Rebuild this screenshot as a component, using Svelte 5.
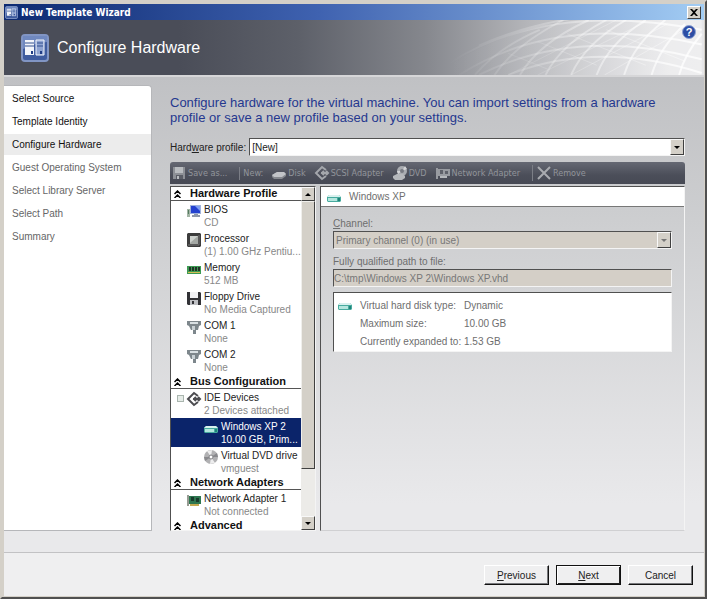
<script>
	// Wizard pages
	const steps = [
		'Select Source',
		'Template Identity',
		'Configure Hardware',
		'Guest Operating System',
		'Select Library Server',
		'Select Path',
		'Summary'
	];
	const currentStep = 2;

	// Toolbar buttons under "New:"
	const newDevices = [
		{ icon: 'disk', label: 'Disk' },
		{ icon: 'scsi', label: 'SCSI Adapter' },
		{ icon: 'dvd', label: 'DVD' },
		{ icon: 'network', label: 'Network Adapter' }
	];

	// Hardware tree
	let groups = $state([
		{
			title: 'Hardware Profile',
			open: true,
			items: [
				{ icon: 'bios', name: 'BIOS', info: 'CD' },
				{ icon: 'cpu', name: 'Processor', info: '(1) 1.00 GHz Pentiu...' },
				{ icon: 'memory', name: 'Memory', info: '512 MB' },
				{ icon: 'floppy', name: 'Floppy Drive', info: 'No Media Captured' },
				{ icon: 'com', name: 'COM 1', info: 'None' },
				{ icon: 'com', name: 'COM 2', info: 'None' }
			]
		},
		{
			title: 'Bus Configuration',
			open: true,
			items: [
				{ icon: 'ide', name: 'IDE Devices', info: '2 Devices attached', root: true },
				{ icon: 'drive', name: 'Windows XP 2', info: '10.00 GB, Prim...', child: true },
				{ icon: 'cd', name: 'Virtual DVD drive', info: 'vmguest', child: true }
			]
		},
		{
			title: 'Network Adapters',
			open: true,
			items: [{ icon: 'nic', name: 'Network Adapter 1', info: 'Not connected' }]
		},
		{ title: 'Advanced', open: true, items: [] }
	]);

	let selected = $state('Windows XP 2');

	const diskInfo = [
		['Virtual hard disk type:', 'Dynamic'],
		['Maximum size:', '10.00 GB'],
		['Currently expanded to:', '1.53 GB']
	];
</script>

{#snippet icon(name)}
	<svg viewBox="0 0 16 16" width="16" height="16" aria-hidden="true">
		{#if name === 'save'}
			<path d="M2 2h12v12H2z" fill="#8d9096" />
			<path d="M4 2h8v6H4z" fill="#b9bcc0" />
			<path d="M5 10h7v4H5z" fill="#5a5d66" />
			<path d="M6 11h2v3H6z" fill="#b9bcc0" />
		{:else if name === 'disk'}
			<path d="M1 10l5-3h7l2 2v2l-4 3H3l-2-2z" fill="#85888e" />
			<path d="M1 10l5-3h7l2 2-4 3H3z" fill="#c2c4c8" />
		{:else if name === 'scsi' || name === 'ide'}
			<g fill="none" stroke={name === 'ide' ? '#4c4c50' : '#a4a7ac'} stroke-width="2">
				<path d="M12 5L8 2 2 8l6 6 4-3" />
				<path d="M7 8h7M10 6L8 8l2 2M12 6l2 2-2 2" />
			</g>
		{:else if name === 'dvd'}
			<circle cx="10" cy="6" r="5" fill="#a9acb1" />
			<path d="M10 6l3-5 2 3zM10 6l-4 3-1-3z" fill="#d4d5d8" />
			<circle cx="10" cy="6" r="2" fill="#777a82" />
			<path d="M1 11l4-2h6l2 2v2l-3 2H3l-2-2z" fill="#b5b8bc" />
		{:else if name === 'network'}
			<path d="M1 3h2v11H1zM3 4h12v7H3z" fill="#989ba1" />
			<path d="M5 5h3v4H5zM10 6h3v3h-3z" fill="#5e616a" />
			<path d="M5 11h7v2H5z" fill="#b5b8bc" />
		{:else if name === 'remove'}
			<path d="M2 2l12 12M14 2L2 14" stroke="#a9abb0" stroke-width="2" fill="none" />
		{:else if name === 'bios'}
			<path d="M1 6h3v8H1z" fill="#a3b5a5" />
			<path d="M2 7h1v4H2z" fill="#557a60" />
			<path d="M4 2h11v9H4z" fill="#9fb2dc" />
			<path d="M5 3h9v7H5z" fill="#2441d0" />
			<path d="M9 3h5v5z" fill="#7fa0f2" />
			<path d="M8 11h4v1h2v2H6v-2h2z" fill="#8e98aa" />
		{:else if name === 'cpu'}
			<path d="M2 1h12l1 1v12l-1 1H2l-1-1V2z" fill="#3c3c3c" />
			<path d="M2 13h11V3" stroke="#777" fill="none" />
			<path d="M4 4h8v8H4z" fill="#a4a8a4" />
			<path d="M4 4h8l-8 7z" fill="#cdd1cd" />
		{:else if name === 'memory'}
			<path d="M1 5h14v8H1z" fill="#3d9a53" />
			<path d="M3 6h2v4H3zM6 6h2v4H6zM9 6h2v4H9zM12 6h2v4h-2z" fill="#223227" />
			<path d="M2 11h12v1H2z" fill="#d3bd54" />
		{:else if name === 'floppy'}
			<path d="M1 2h13l1 1v12H2l-1-1z" fill="#323236" />
			<path d="M4 2h8v6H4z" fill="#f1f1f3" />
			<path d="M4 10h8v5H4z" fill="#bfc0c4" />
			<path d="M6 11h2v3H6z" fill="#323236" />
		{:else if name === 'com'}
			<path d="M1 2h14v4l-2 1H3L1 6z" fill="#7e878c" />
			<path d="M4 3h8v2H4z" fill="#d9e0e3" />
			<path d="M3 7h10l-1 4h-2v4H7v-4H5z" fill="#7d878c" />
			<path d="M6 7h3v4H6z" fill="#c9d1d5" />
		{:else if name === 'drive'}
			<path d="M1 8l2-2h10l2 2v4l-1 1H2l-1-1z" fill="#48ab9f" />
			<path d="M1 8l2-2h10l2 2z" fill="#d9f1ee" />
			<path d="M2 9h9v3H2z" fill="#b4e6de" />
			<path d="M12 9h2v3h-2z" fill="#1f8378" />
		{:else if name === 'cd'}
			<circle cx="8" cy="8" r="7" fill="#b1b1b3" />
			<path d="M8 8L4 2l5-1zM8 8l4 6-5 1z" fill="#ededee" />
			<path d="M8 8l6-4 1 4zM8 8l-6 4-1-4z" fill="#89898d" />
			<circle cx="8" cy="8" r="2" fill="#fff" stroke="#808084" />
		{:else if name === 'nic'}
			<path d="M1 3h2v11H1z" fill="#969b92" />
			<path d="M3 4h12v8H3z" fill="#2e7650" />
			<path d="M5 5h3v4H5zM10 6h3v4h-3z" fill="#193b2c" />
			<path d="M4 12h9v2H4z" fill="#c3a950" />
		{/if}
	</svg>
{/snippet}

{#snippet server(size)}
	<svg viewBox="0 0 28 28" width={size} height={size} aria-hidden="true">
		<rect x="1" y="1" width="26" height="26" rx="3" fill="#3f5c9f" stroke="#8195c4" stroke-width="2" />
		<path d="M2 2h24v6Q14 9 2 15z" fill="#7089c0" />
		<path d="M4 6h9v15H4z" fill="#f2f5fb" />
		<path d="M15 6h8v15h-8z" fill="#8fa4d2" stroke="#f2f5fb" />
		<path d="M4 9h9M4 12h9M16 9h6M16 12h6" stroke="#32508f" />
		<path d="M10 17h2v3h-2zM19 17h2v3h-2z" fill="#203d86" />
	</svg>
{/snippet}

<div class="window">
	<header class="titlebar">
		{@render server(13)}
		<span class="title">New Template Wizard</span>
		<button class="close" aria-label="Close">
			<svg viewBox="0 0 8 7" width="8" height="7"><path d="M0 0h2l2 2 2-2h2L5 3.500 8 7H6L4 5 2 7H0l3-3.500z" fill="#000" /></svg>
		</button>
	</header>

	<div class="banner">
		<svg class="mesh" viewBox="0 0 257 56" width="257" height="56" aria-hidden="true">
			<defs>
				<linearGradient id="fade" gradientUnits="userSpaceOnUse" x1="0" y1="0" x2="257" y2="0">
					<stop offset="0" stop-color="#fff" stop-opacity="0" />
					<stop offset="0.4" stop-color="#fff" stop-opacity="0.25" />
					<stop offset="1" stop-color="#fff" stop-opacity="0.8" />
				</linearGradient>
			</defs>
			<path d="M0 46Q100-18 257 0v56H0z" fill="url(#fade)" opacity="0.4" />
			<g fill="none" stroke="url(#fade)" stroke-width="2">
				<path d="M0 44Q100-20 257 10M10 56Q110-8 257 25M30 56Q130 6 257 40M60 56Q150 20 257 54M30 26Q130-18 257-2" />
				<path d="M26 56Q50 28 92 10M46 56Q66 26 116 0M72 56Q90 24 142 0M98 56Q114 24 160 0M124 56Q138 24 180 0M150 56Q162 24 200 0M178 56Q188 24 220 0M206 56Q214 28 240 4M234 56Q240 34 257 14" />
			</g>
			<g fill="none" stroke="url(#fade)" opacity="0.6">
				<path d="M60 56L170 0M90 56L200 2M124 56L222 4M158 56L250 4M60 34L100 50M90 22L150 46M120 14L200 46M160 10L240 42" />
			</g>
		</svg>
		{@render server(28)}
		<h1>Configure Hardware</h1>
		<button class="help" aria-label="Help">?</button>
	</div>

	<div class="body">
		<nav class="steps">
			{#each steps as step, i}
				<a href="#step{i}" class:active={i === currentStep} class:todo={i > currentStep}>{step}</a>
			{/each}
		</nav>

		<main>
			<p class="intro">
				Configure hardware for the virtual machine. You can import settings from a hardware
				profile or save a new profile based on your settings.
			</p>

			<div class="profile">
				<label for="profile">Hard<u>w</u>are profile:</label>
				<div class="select">
					<select id="profile"><option>[New]</option></select>
					<span class="arrow"></span>
				</div>
			</div>

			<div class="toolbar">
				<button disabled>{@render icon('save')}Save as...</button>
				<span class="new">New:</span>
				{#each newDevices as device}
					<button disabled>{@render icon(device.icon)}{device.label}</button>
				{/each}
				<button class="remove" disabled>{@render icon('remove')}Remove</button>
			</div>

			<div class="panes">
				<div class="tree">
					<div class="tree-list">
						{#each groups as group}
							<button class="group" onclick={() => (group.open = !group.open)}>
								<svg class:closed={!group.open} viewBox="0 0 7 8" width="7" height="8" aria-hidden="true">
									<path d="M0.500 4l3-3 3 3M0.500 8l3-3 3 3" fill="none" stroke="#000" stroke-width="1.500" />
								</svg>
								{group.title}
							</button>
							{#if group.open}
								{#each group.items as item}
									<button
										class="item"
										class:root={item.root}
										class:child={item.child}
										class:selected={selected === item.name}
										onclick={() => (selected = item.name)}
									>
										{#if item.root}<span class="expander"></span>{/if}
										{@render icon(item.icon)}
										<span class="text">
											<span class="name">{item.name}</span>
											<span class="info">{item.info}</span>
										</span>
									</button>
								{/each}
							{/if}
						{/each}
					</div>
					<div class="scrollbar">
						<span class="arrow up"></span>
						<span class="thumb"></span>
						<span class="arrow"></span>
					</div>
				</div>

				<section class="detail">
					<h2>{@render icon('drive')}Windows XP</h2>
					<div class="form">
						<label for="channel"><u>C</u>hannel:</label>
						<div class="select off">
							<select id="channel" disabled><option>Primary channel (0) (in use)</option></select>
							<span class="arrow"></span>
						</div>
						<label for="path">Fully qualified path to file:</label>
						<input id="path" type="text" value="C:\tmp\Windows XP 2\Windows XP.vhd" disabled />
						<div class="disk">
							{@render icon('drive')}
							<dl>
								{#each diskInfo as [term, value]}
									<dt>{term}</dt>
									<dd>{value}</dd>
								{/each}
							</dl>
						</div>
					</div>
				</section>
			</div>
		</main>
	</div>

	<footer>
		<button><u>P</u>revious</button>
		<button class="default"><u>N</u>ext</button>
		<button>Cancel</button>
	</footer>
</div>

<style>
	:global(body) {
		margin: 0;
	}

	.window {
		box-sizing: border-box;
		height: 100vh;
		display: flex;
		flex-direction: column;
		padding: 2px 1px 1px 2px;
		border: 2px solid #d4d0c8;
		border-right-color: #505050;
		border-bottom-color: #505050;
		background: #d4d0c8;
		font-family: 'Liberation Sans', sans-serif;
		font-size: 10px;
		line-height: 13px;
		color: #222;
	}

	button,
	select,
	input {
		box-sizing: border-box;
		margin: 0;
		padding: 0;
		border: none;
		border-radius: 0;
		background: none;
		font: inherit;
		color: inherit;
		text-align: left;
	}

	svg {
		flex: none;
		display: block;
	}

	/* Title bar */
	.titlebar {
		flex: none;
		height: 16px;
		display: flex;
		align-items: center;
		gap: 3px;
		padding: 0 3px 0 1px;
		background: linear-gradient(90deg, #0d2a71, #3f62b0 45%, #a3cdf4);
	}

	.title {
		flex: 1;
		color: #fff;
		font: bold 10px 'DejaVu Sans Condensed', 'DejaVu Sans', sans-serif;
	}

	.close {
		width: 14px;
		height: 13px;
		display: flex;
		align-items: center;
		justify-content: center;
		background: #d4d0c8;
		border: 1px solid;
		border-color: #fff #404040 #404040 #fff;
	}

	/* Banner */
	.banner {
		position: relative;
		flex: none;
		height: 55px;
		display: flex;
		align-items: center;
		gap: 8px;
		padding: 0 17px;
		background: linear-gradient(90deg, #4a4d58 25%, #5d6069 42%, #85878d 60%, #b5b6ba 75%, #e6e6e8 95%);
		border-bottom: 2px solid #d6d6d8;
	}

	.mesh {
		position: absolute;
		right: 0;
		top: 0;
		height: 100%;
	}

	h1 {
		margin: 0;
		flex: 1;
		color: #fff;
		font: 16px/20px 'Liberation Sans', sans-serif;
	}

	.help {
		position: absolute;
		right: 8px;
		top: 5px;
		width: 14px;
		height: 14px;
		border: 1px solid #8ea2d2;
		border-radius: 50%;
		background: #2c4da4;
		color: #fff;
		font: bold 11px/12px 'Liberation Sans', sans-serif;
		text-align: center;
	}

	/* Body */
	.body {
		flex: 1;
		min-height: 0;
		display: flex;
		gap: 18px;
		padding: 8px 19px 21px 0;
		background: linear-gradient(#c0c1c4, #cdced0 30%, #e9e9eb 90%);
	}

	.steps {
		flex: none;
		width: 148px;
		display: flex;
		flex-direction: column;
		gap: 2px;
		padding-top: 2px;
		box-sizing: border-box;
		border: 1px solid #b6b7ba;
		border-left: none;
		border-radius: 0 4px 0 0;
		background: #fff;
	}

	.steps a {
		padding: 4px 8px;
		color: #111;
		text-decoration: none;
	}

	.steps a.active {
		background: #ececec;
	}

	.steps a.todo {
		color: #666;
	}

	main {
		flex: 1;
		min-width: 0;
		display: flex;
		flex-direction: column;
	}

	.intro {
		margin: 10px 0 13px;
		max-width: 490px;
		color: #25388f;
		font: 13px/15px 'Liberation Sans', sans-serif;
	}

	.profile {
		display: flex;
		align-items: center;
		gap: 3px;
	}

	.select {
		flex: 1;
		height: 18px;
		box-sizing: border-box;
		display: flex;
		border: 1px solid;
		border-color: #505050 #f4f4f4 #f4f4f4 #505050;
		background: #fff;
	}

	.select select {
		flex: 1;
		appearance: none;
		padding-left: 2px;
		opacity: 1;
	}

	.arrow {
		flex: none;
		box-sizing: border-box;
		width: 14px;
		height: 14px;
		display: flex;
		align-items: center;
		justify-content: center;
		border: 1px solid;
		border-color: #f8f8f8 #404040 #404040 #f8f8f8;
		background: #d4d0c8;
		pointer-events: none;
	}

	.select .arrow {
		height: auto;
	}

	.arrow::after {
		content: '';
		border: 3px solid transparent;
		border-top-color: #000;
		border-bottom: none;
	}

	.arrow.up::after {
		border-top: none;
		border-bottom: 3px solid #000;
	}

	/* Toolbar */
	.toolbar {
		flex: none;
		height: 22px;
		margin-top: 6px;
		display: flex;
		align-items: center;
		gap: 8px;
		padding-left: 1px;
		border-radius: 3px 3px 0 0;
		background: linear-gradient(#656873, #4b4e59 60%, #474a55);
		color: #92959b;
		font: 9px/13px 'DejaVu Sans Condensed', 'DejaVu Sans', sans-serif;
		white-space: nowrap;
	}

	.toolbar button {
		display: flex;
		align-items: center;
		gap: 1px;
	}

	.toolbar .new,
	.toolbar .remove {
		margin-left: 4px;
		padding-left: 3px;
		border-left: 1px solid #7b7e86;
	}

	/* Panes */
	.panes {
		flex: 1;
		min-height: 0;
		display: flex;
		gap: 4px;
		padding-top: 2px;
	}

	.tree {
		flex: none;
		box-sizing: border-box;
		width: 146px;
		display: flex;
		border: 1px solid;
		border-color: #505050 #f4f4f4 #f4f4f4 #505050;
		background: #fff;
	}

	.tree-list {
		flex: 1;
		min-width: 0;
		overflow: hidden;
	}

	.group {
		width: 100%;
		height: 14px;
		display: flex;
		align-items: center;
		gap: 9px;
		padding-left: 3px;
		border-bottom: 1px solid #555;
		color: #111;
		font: bold 11px/13px 'Liberation Sans', sans-serif;
	}

	.closed {
		transform: rotate(180deg);
	}

	.item {
		width: 100%;
		height: 29px;
		display: flex;
		gap: 2px;
		padding: 2px 0 0 15px;
		white-space: nowrap;
	}

	.item.root {
		padding-left: 6px;
	}

	.item.child {
		padding-left: 32px;
	}

	.item.selected {
		background: #0b246a;
	}

	.text span {
		display: block;
	}

	.info {
		color: #888;
	}

	.selected .text span {
		color: #fff;
	}

	.expander {
		width: 5px;
		height: 5px;
		margin: 4px 0 0;
		border: 1px solid #a9b5ae;
		background: #e6ece8;
	}

	.scrollbar {
		flex: none;
		width: 14px;
		display: flex;
		flex-direction: column;
		background: #ecebe8;
	}

	.thumb {
		flex: none;
		height: 78%;
		box-sizing: border-box;
		border: 1px solid;
		border-color: #f0efec #404040 #404040 #f0efec;
		background: #d4d0c8;
	}

	.scrollbar .arrow:last-child {
		margin-top: auto;
	}

	.detail {
		flex: 1;
		min-width: 0;
		border: 1px solid;
		border-color: #505050 #f4f4f4 #d0d0d2 #505050;
		color: #6e6e6e;
	}

	h2 {
		margin: 0;
		height: 19px;
		display: flex;
		align-items: center;
		gap: 7px;
		padding-left: 5px;
		border-bottom: 1px solid #777;
		background: #fff;
		font-size: 10px;
		font-weight: normal;
	}

	.form {
		display: flex;
		flex-direction: column;
		padding: 10px 12px;
	}

	.form label {
		margin-bottom: 1px;
	}

	.form .select {
		flex: none;
		margin-bottom: 6px;
	}

	.off,
	.form input {
		background: #d4cfc7;
	}

	.off .arrow::after {
		border-top-color: #777;
	}

	.form select,
	.form input {
		color: #777;
	}

	.form input {
		height: 18px;
		border: 1px solid;
		border-color: #505050 #f4f4f4 #f4f4f4 #505050;
	}

	.disk {
		display: flex;
		gap: 7px;
		margin-top: 5px;
		padding: 4px 3px 0;
		border: 1px solid;
		border-color: #505050 #f4f4f4 #f4f4f4 #505050;
		background: #fff;
	}

	dl {
		margin: 0;
		display: grid;
		grid-template-columns: 104px auto;
		line-height: 18px;
		white-space: nowrap;
	}

	dd {
		margin: 0;
	}

	/* Footer */
	footer {
		flex: none;
		display: flex;
		justify-content: flex-end;
		gap: 7px;
		padding: 12px 11px 11px;
		border-top: 1px solid #c2c2c4;
		background: #efeff0;
	}

	footer button {
		width: 65px;
		height: 20px;
		border: 1px solid;
		border-color: #fff #111 #111 #fff;
		box-shadow: inset -1px -1px #77787c;
		text-align: center;
	}

	footer .default {
		border-color: #111;
		box-shadow: inset 1px 1px #fff, inset -1px -1px #222;
	}
</style>
